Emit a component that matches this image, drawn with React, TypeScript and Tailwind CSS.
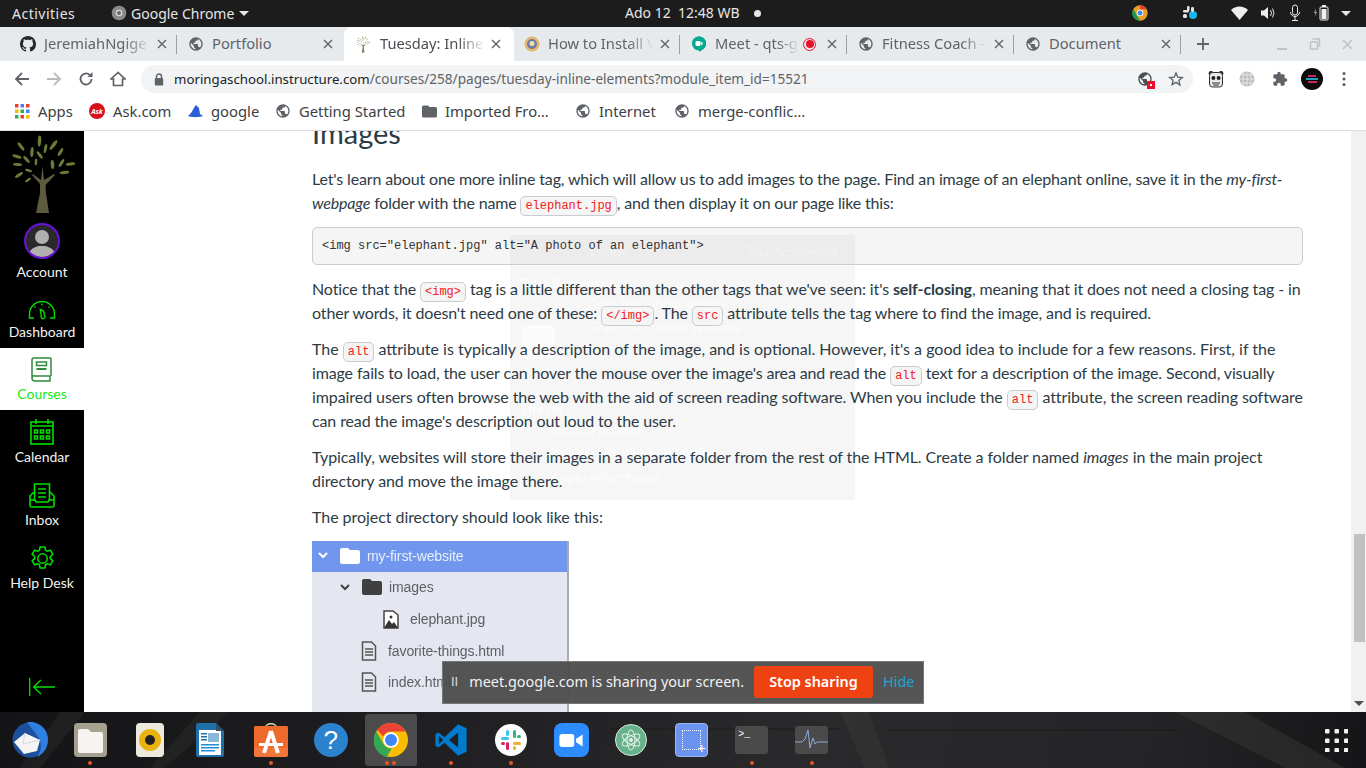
import React from "react";

const Globe = ({ size = 16, color = "#5f6368" }: { size?: number; color?: string }) => (
  <svg width={size} height={size} viewBox="0 0 24 24" className="shrink-0">
    <path fill={color} d="M12 2C6.48 2 2 6.48 2 12s4.48 10 10 10 10-4.48 10-10S17.52 2 12 2zm-1 17.93c-3.95-.49-7-3.85-7-7.93 0-.62.08-1.21.21-1.79L9 15v1c0 1.1.9 2 2 2v1.93zm6.9-2.54c-.26-.81-1-1.39-1.9-1.39h-1v-3c0-.55-.45-1-1-1H8v-2h2c.55 0 1-.45 1-1V7h2c1.1 0 2-.9 2-2v-.41c2.93 1.19 5 4.06 5 7.41 0 2.08-.8 3.97-2.1 5.39z" />
  </svg>
);

const GitHub = () => (
  <svg width="16" height="16" viewBox="0 0 16 16" className="shrink-0">
    <path fill="#24292e" d="M8 0C3.58 0 0 3.58 0 8c0 3.54 2.29 6.53 5.47 7.59.4.07.55-.17.55-.38 0-.19-.01-.82-.01-1.49-2.01.37-2.53-.49-2.69-.94-.09-.23-.48-.94-.82-1.13-.28-.15-.68-.52-.01-.53.63-.01 1.08.58 1.23.82.72 1.21 1.87.87 2.33.66.07-.52.28-.87.51-1.07-1.78-.2-3.64-.89-3.64-3.95 0-.87.31-1.59.82-2.15-.08-.2-.36-1.02.08-2.12 0 0 .67-.21 2.2.82.64-.18 1.32-.27 2-.27s1.36.09 2 .27c1.53-1.04 2.2-.82 2.2-.82.44 1.1.16 1.92.08 2.12.51.56.82 1.27.82 2.15 0 3.07-1.87 3.75-3.65 3.95.29.25.54.73.54 1.48 0 1.07-.01 1.93-.01 2.2 0 .21.15.46.55.38A8.01 8.01 0 0016 8c0-4.42-3.58-8-8-8z" />
  </svg>
);

const TreeIcon = ({ w, h, leaf, trunk }: { w: number; h: number; leaf: string; trunk: string }) => {
  const leaves: [number, number, number, number, number][] = [
    [39.5, 10, 1.8, 5.5, 3], [21, 15.5, 1.6, 5, -38], [32, 21, 1.6, 5, 5], [45.5, 17.5, 1.5, 4.6, 12],
    [53.5, 14, 1.8, 6, 38], [60.5, 21, 1.6, 4.6, 30], [39.7, 24, 1.5, 4.4, -38], [17, 25.5, 1.5, 4.8, -72], [26.5, 28.5, 1.6, 4.4, -42],
    [36, 31, 1.3, 3.4, 3], [52.5, 33.5, 1.8, 4.6, -4], [61.5, 32, 1.6, 4.6, 32], [17.5, 33.5, 1.4, 4.6, -88], [70.5, 33, 1.6, 4.8, 84],
    [64.5, 41.5, 1.6, 4.8, 84], [28.5, 39.5, 1.3, 3.6, -75], [19, 44, 1.6, 4.6, 55], [28, 49, 1.3, 3.4, 55],
  ];
  return (
    <svg width={w} height={h} viewBox="0 0 84 84" className="shrink-0">
      {leaves.map(([x, y, rx, ry, a], i) => (
        <ellipse key={i} cx={x} cy={y} rx={rx} ry={ry} transform={`rotate(${a} ${x} ${y})`} fill={leaf} />
      ))}
      <path fill={trunk} d="M36 82L40 62L40 53L32 44L33 43L41 49L42.5 35L44 49L54 43L55 44L45.500 54L46 62L49 82Z" />
    </svg>
  );
};

const Tab = ({ icon, title, active, sep = true, fade = true, extra, w }: { icon: React.ReactNode; title: string; active?: boolean; sep?: boolean; fade?: boolean; extra?: React.ReactNode; w: string }) => (
  <div className={`relative flex h-[34px] shrink-0 items-center ${w} ${active ? "rounded-t-[8px] bg-white pl-[10px] pr-[11px]" : "pl-[10px] pr-[9px]"}`}>
    {icon}
    <span className={`ml-[8px] min-w-0 flex-1 overflow-hidden whitespace-nowrap pb-[2px] text-[14.7px] ${active ? "text-[#4a4d51]" : "text-[#5f6368]"} ${fade ? "[mask-image:linear-gradient(to_right,black_75%,transparent_100%)]" : ""}`}>{title}</span>
    {extra}
    <svg width="10" height="10" viewBox="0 0 10 10" className="ml-[6px] mr-[2px] shrink-0"><path d="M1 1l8 8M9 1l-8 8" stroke="#5f6368" strokeWidth="1.4" /></svg>
    {sep && <span className="absolute right-[1px] top-[8px] h-[19px] w-px bg-[#9aa0a6]" />}
  </div>
);

const Bookmark = ({ icon, label, w }: { icon: React.ReactNode; label: string; w: string }) => (
  <div className={`flex items-center gap-[8px] whitespace-nowrap text-[14.800px] text-[#3c4043] ${w}`}>
    {icon}
    <span>{label}</span>
  </div>
);

const NavItem = ({ icon, label, active, h }: { icon: React.ReactNode; label: string; active?: boolean; h: string }) => (
  <div className={`flex flex-col items-center justify-end pb-[6px] ${h} ${active ? "bg-white text-[#14ea14]" : "text-[#f2f2f2]"}`}>
    {icon}
    <span className="mt-[2px] text-[14px] leading-[20px]">{label}</span>
  </div>
);

const Code = ({ children }: { children: React.ReactNode }) => (
  <code className="rounded-[5px] border border-[#c7cdd1] bg-[#f5f5f5] px-[4px] py-[2px] font-['Liberation_Mono',monospace] text-[12px] leading-none tracking-normal text-[#f22020]">{children}</code>
);

const L = ({ t, children }: { t: string; children: React.ReactNode }) => (
  <span className={`block whitespace-nowrap ${t}`}>{children}</span>
);

const green = "#00e000";

const FolderI = ({ c }: { c: string }) => (
  <svg width="20" height="16" viewBox="0 0 20 16" className="shrink-0"><path fill={c} d="M2 0h6l2 2h8a2 2 0 012 2v10a2 2 0 01-2 2H2a2 2 0 01-2-2V2a2 2 0 012-2z" /></svg>
);
const FileI = () => (
  <svg width="16" height="20" viewBox="0 0 16 20" className="shrink-0" fill="none" stroke="#555" strokeWidth="1.5"><path d="M1.5 1h9l4 4v14h-13zM4 8h8M4 11h8M4 14h8" /></svg>
);
const Chev = ({ c }: { c: string }) => (
  <svg width="10" height="7" viewBox="0 0 10 7" className="shrink-0"><path d="M1 1l4 4 4-4" fill="none" stroke={c} strokeWidth="2" /></svg>
);

const TreeRow = ({ pad, children, h = "h-[31.500px]" }: { pad: string; children: React.ReactNode; h?: string }) => (
  <div className={`flex items-center ${h} ${pad} font-['Liberation_Sans',sans-serif] text-[14px] tracking-[-0.1px] text-[#5c5f66] blur-[0.6px]`}>{children}</div>
);

const DockItem = ({ children, dots = 0, active }: { children: React.ReactNode; dots?: number; active?: boolean }) => (
  <div className={`flex h-[52px] w-[52px] shrink-0 flex-col items-center rounded-[3px] pt-[4px] ${active ? "bg-white/20" : ""}`}>
    <div className="flex h-[44px] items-center justify-center">{children}</div>
    <div className="mt-[-1px] flex h-[4px] justify-center gap-[3px]">
      {Array.from({ length: dots }).map((_, i) => (
        <span key={i} className="h-[4px] w-[4px] rounded-full bg-[#e95420]" />
      ))}
    </div>
  </div>
);

export default function App() {
  return (
    <div className="flex h-[768px] w-[1366px] flex-col overflow-hidden bg-white font-['Noto_Sans',sans-serif]">
      {/* GNOME top bar */}
      <header className="relative flex h-[27px] shrink-0 items-center bg-[#1c1c1c] pb-[1px] text-[14px] text-[#e6e6e6]">
        <span className="ml-[12px] w-[99px] tracking-[0.5px]">Activities</span>
        <svg width="16" height="16" viewBox="0 0 24 24" className="shrink-0"><circle cx="12" cy="12" r="11" fill="#8a8a8a" /><circle cx="12" cy="12" r="5" fill="#d8d8d8" /><circle cx="12" cy="12" r="3" fill="#666" /></svg>
        <span className="ml-[4px]">Google Chrome</span>
        <span className="ml-[5px] h-0 w-0 border-x-[5px] border-t-[5px] border-x-transparent border-t-[#e6e6e6]" />
        <span className="absolute left-[625px] top-[2px] whitespace-pre">Ado 12  12:48 WB</span>
        <span className="absolute left-[754px] top-[10px] h-[7px] w-[7px] rounded-full bg-[#e6e6e6]" />
        <div className="ml-auto flex items-center">
          <svg width="16" height="16" viewBox="0 0 48 48" className="shrink-0"><circle cx="24" cy="24" r="23" fill="#e8a020" /><path d="M24 1a23 23 0 0120 11.500H24z" fill="#db4437" /><path d="M4 12.500L14 30l10 17a23 23 0 01-20-34.500z" fill="#0f9d58" /><circle cx="24" cy="24" r="10" fill="#fff" /><circle cx="24" cy="24" r="7.500" fill="#4285f4" /></svg>
          <svg width="16" height="16" viewBox="0 0 16 16" className="ml-[34px] shrink-0"><rect x="1" y="5" width="6" height="2.500" rx="1.200" fill="#e6e6e6" /><rect x="5" y="1" width="2.500" height="5" rx="1.200" fill="#e6e6e6" /><rect x="1" y="9" width="4" height="4" rx="1.500" fill="#e6e6e6" /><circle cx="11" cy="10" r="4" fill="#16b6e8" /><rect x="9" y="2" width="3" height="5" rx="1.400" fill="#e6e6e6" /></svg>
          <svg width="17" height="14" viewBox="0 0 17 14" className="ml-[33px] shrink-0"><path d="M0 4a12 12 0 0117 0l-8.500 10z" fill="#eee" /></svg>
          <svg width="15" height="14" viewBox="0 0 15 14" className="ml-[13px] shrink-0"><path d="M0 4.500h3L7 1v12L3 9.500H0z" fill="#eee" /><path d="M9.500 4q2 3 0 6M11.500 2.500q3 4.500 0 9" stroke="#ddd" fill="none" /></svg>
          <svg width="12" height="18" viewBox="0 0 12 18" className="ml-[13px] shrink-0"><rect x="3.500" y="1" width="5" height="10" rx="2.500" fill="none" stroke="#eee" /><path d="M1.500 8a4.500 4.500 0 009 0M6 12.500V16M3 16.500h6" stroke="#eee" fill="none" /></svg>
          <svg width="16" height="18" viewBox="0 0 16 18" className="ml-[12px] shrink-0"><path d="M3 4L1 9h1.500L1.500 13 4 8H2.500z" fill="#aaa" /><rect x="7" y="3" width="8" height="13" rx="1" fill="none" stroke="#eee" /><rect x="8.500" y="5" width="5" height="10" fill="#eee" /><rect x="9" y="1" width="4" height="2" fill="#eee" /></svg>
          <span className="ml-[12px] mr-[15px] h-0 w-0 border-x-[5px] border-t-[5px] border-x-transparent border-t-[#e6e6e6]" />
        </div>
      </header>

      {/* Tab strip */}
      <div className="flex h-[34px] shrink-0 items-center bg-[#e7eaed] pl-[10px]">
        <Tab w="w-[168px]" icon={<GitHub />} title="JeremiahNgige" />
        <Tab w="w-[166px]" icon={<Globe />} title="Portfolio" sep={false} fade={false} />
        <Tab w="w-[170px]" active icon={<TreeIcon w={18} h={18} leaf="#8a9a5b" trunk="#77775a" />} title="Tuesday: Inline" sep={false} />
        <Tab
          w="w-[167px]"
          icon={
            <svg width="16" height="16" viewBox="0 0 16 16" className="shrink-0"><circle cx="8" cy="8" r="7.500" fill="#e8b56a" /><circle cx="8" cy="8" r="5" fill="#6b7ea8" /><circle cx="8" cy="7.500" r="2.500" fill="#f5dcb0" /></svg>
          }
          title="How to Install V"
        />
        <Tab
          w="w-[167px]"
          icon={
            <svg width="16" height="16" viewBox="0 0 16 16" className="shrink-0"><path d="M8 0.500a7 7 0 017 7c0 4-3.500 6.500-7 8v-2a5.500 5.500 0 010-13z" fill="#00897b" /><circle cx="8" cy="7.500" r="7" fill="#00a98f" /><rect x="4.500" y="5" width="5" height="5" rx="1" fill="#fff" /><path d="M9.500 7l2-1.500v4l-2-1.500z" fill="#fff" /></svg>
          }
          title="Meet - qts-g"
          extra={
            <span className="ml-[4px] mr-[5px] flex h-[13px] w-[13px] shrink-0 items-center justify-center rounded-full border-[1.500px] border-[#e8102a]"><span className="h-[8px] w-[8px] rounded-full bg-[#e8102a]" /></span>
          }
        />
        <Tab w="w-[167px]" icon={<Globe />} title="Fitness Coach -" />
        <Tab w="w-[167px]" icon={<Globe />} title="Document" fade={false} />
        <svg width="14" height="14" viewBox="0 0 14 14" className="ml-[14px] shrink-0"><path d="M7 1v12M1 7h12" stroke="#5f6368" strokeWidth="1.800" /></svg>
        <div className="ml-auto flex items-center">
          <span className="mt-[10px] h-[2px] w-[10px] bg-[#bfc3c7]" />
          <svg width="12" height="12" viewBox="0 0 12 12" className="ml-[22px] shrink-0"><path d="M3.500 1h7v7h-2M1.500 4h7v7h-7z" fill="none" stroke="#bfc3c7" strokeWidth="1.500" /></svg>
          <svg width="11" height="11" viewBox="0 0 11 11" className="ml-[21px] mr-[13px] shrink-0"><path d="M1 1l9 9M10 1l-9 9" stroke="#bfc3c7" strokeWidth="1.600" /></svg>
        </div>
      </div>

      {/* Toolbar */}
      <div className="flex h-[36px] shrink-0 items-center bg-white">
        <svg width="16" height="16" viewBox="0 0 16 16" className="ml-[14px] shrink-0"><path d="M15 8H2M8 2L2 8l6 6" fill="none" stroke="#5f6368" strokeWidth="1.800" /></svg>
        <svg width="16" height="16" viewBox="0 0 16 16" className="ml-[16px] shrink-0"><path d="M1 8h13M8 2l6 6-6 6" fill="none" stroke="#b8babd" strokeWidth="1.800" /></svg>
        <svg width="16" height="16" viewBox="0 0 16 16" className="ml-[16px] shrink-0"><path d="M13.500 8a5.500 5.500 0 11-1.700-4" fill="none" stroke="#5f6368" strokeWidth="1.800" /><path d="M14.500 1v5h-5z" fill="#5f6368" /></svg>
        <svg width="16" height="16" viewBox="0 0 16 16" className="ml-[16px] shrink-0"><path d="M8 1.500L1 8h2.500v6.500h9V8H15z" fill="none" stroke="#5f6368" strokeWidth="1.700" /></svg>
        <div className="ml-[15px] flex h-[28px] w-[1052px] shrink-0 items-center rounded-full bg-[#f1f3f4] pl-[13px]">
          <svg width="10" height="13" viewBox="0 0 10 13" className="shrink-0"><path d="M2.500 5V3.500a2.500 2.500 0 015 0V5" fill="none" stroke="#5f6368" strokeWidth="1.400" /><rect x="0.800" y="5" width="8.400" height="7.500" rx="1" fill="#5f6368" /></svg>
          <span className="ml-[10px] whitespace-nowrap pb-[2px]"><span className="text-[13.250px] text-[#202124]">moringaschool.instructure.com</span><span className="text-[13.600px] text-[#5f6368]">/courses/258/pages/tuesday-inline-elements?module_item_id=15521</span></span>
          <div className="ml-auto flex items-center">
            <span className="relative mr-[2px] block h-[16px] w-[16px]">
              <Globe size={16} color="#4a4d51" />
              <span className="absolute bottom-[-2px] right-[-2px] flex h-[8px] w-[8px] items-center justify-center bg-[#e8102a]"><span className="h-[2px] w-[2px] bg-white" /></span>
            </span>
            <svg width="16" height="16" viewBox="0 0 24 24" className="ml-[13px] mr-[9px] shrink-0"><path d="M12 3l2.700 6.200 6.800.6-5.100 4.500 1.500 6.700L12 17l-5.900 3.500 1.500-6.700L2.500 9.800l6.800-.6z" fill="none" stroke="#5f6368" strokeWidth="2" /></svg>
          </div>
        </div>
        <svg width="16" height="18" viewBox="0 0 16 18" className="ml-[15px] shrink-0"><circle cx="3" cy="3.500" r="2.400" fill="#222" /><circle cx="13" cy="3.500" r="2.400" fill="#222" /><rect x="1.500" y="2.500" width="13" height="14.500" rx="3" fill="#e8e8e8" stroke="#333" /><circle cx="5.400" cy="8" r="2" fill="#222" /><circle cx="10.600" cy="8" r="2" fill="#222" /><path d="M4 13h8M5 15h6" stroke="#333" /></svg>
        <svg width="16" height="16" viewBox="0 0 16 16" className="ml-[15px] shrink-0"><circle cx="8" cy="8" r="7.500" fill="#bdbdbd" /><path d="M0.500 8h15M8 0.500v15M2 4h12M2 12h12M5 1.500q-2.500 6.500 0 13M11 1.500q2.500 6.500 0 13" stroke="#f2f2f2" strokeWidth="0.700" fill="none" /></svg>
        <svg width="16" height="16" viewBox="0 0 24 24" className="ml-[17px] shrink-0"><path fill="#5f6368" d="M20.500 11H19V7a2 2 0 00-2-2h-4V3.500a2.500 2.500 0 00-5 0V5H4a2 2 0 00-2 2v3.800h1.500a2.700 2.700 0 010 5.400H2V20a2 2 0 002 2h3.800v-1.500a2.700 2.700 0 015.400 0V22H17a2 2 0 002-2v-4h1.500a2.500 2.500 0 000-5z" /></svg>
        <span className="ml-[13px] flex h-[22px] w-[22px] shrink-0 flex-col items-center justify-center gap-[1px] rounded-full bg-[#0b0b0b]"><span className="h-[2px] w-[8px] bg-[#d0245e]" /><span className="h-[2px] w-[12px] bg-[#1aa5c4]" /><span className="h-[2px] w-[9px] bg-[#c2304f]" /></span>
        <svg width="4" height="16" viewBox="0 0 4 16" className="ml-[19px] shrink-0"><circle cx="2" cy="2.500" r="1.600" fill="#5f6368" /><circle cx="2" cy="8" r="1.600" fill="#5f6368" /><circle cx="2" cy="13.500" r="1.600" fill="#5f6368" /></svg>
      </div>

      {/* Bookmarks bar */}
      <div className="flex h-[34px] shrink-0 items-center border-b border-[#dadce0] bg-white pb-[5px] pl-[15px]">
        <Bookmark
          w="w-[74px]"
          icon={
            <svg width="15" height="15" viewBox="0 0 15 15" className="shrink-0">
              {[0, 5.5, 11].map((y, r) =>
                [0, 5.5, 11].map((x, c) => (
                  <rect key={`${r}${c}`} x={x} y={y} width="3.500" height="3.500" fill={[["#ea4335", "#4285f4", "#ea4335"], ["#fbbc04", "#34a853", "#4285f4"], ["#34a853", "#ea4335", "#fbbc04"]][r][c]} />
                ))
              )}
            </svg>
          }
          label="Apps"
        />
        <Bookmark
          w="w-[98px]"
          icon={
            <span className="flex h-[16px] w-[16px] shrink-0 items-center justify-center rounded-full bg-[#d8101c] text-[7px] font-bold italic leading-none text-white">Ask</span>
          }
          label="Ask.com"
        />
        <Bookmark
          w="w-[88px]"
          icon={<svg width="16" height="15" viewBox="0 0 16 15" className="shrink-0"><path d="M9 1C7 3 6 6 4 9L1 12c2 1.500 12 1.500 15 0l-3-2-1-6c-1-1-2-2-3-3z" fill="#2a5fd8" /></svg>}
          label="google"
        />
        <Bookmark w="w-[147px]" icon={<Globe />} label="Getting Started" />
        <Bookmark
          w="w-[153px]"
          icon={<svg width="15" height="13" viewBox="0 0 20 16" className="shrink-0"><path fill="#5f6368" d="M2 0h6l2 2h8a2 2 0 012 2v10a2 2 0 01-2 2H2a2 2 0 01-2-2V2a2 2 0 012-2z" /></svg>}
          label="Imported Fro…"
        />
        <Bookmark w="w-[99px]" icon={<Globe />} label="Internet" />
        <Bookmark w="w-[140px]" icon={<Globe />} label="merge-conflic…" />
      </div>

      {/* Main */}
      <main className="relative flex min-h-0 flex-1 overflow-hidden">
        {/* LMS sidebar */}
        <nav className="flex w-[84px] shrink-0 flex-col bg-black font-['Lato',sans-serif]">
          <div className="flex h-[84px] shrink-0 justify-center"><TreeIcon w={84} h={84} leaf="#6a7c35" trunk="#5c5a3f" /></div>
          <div className="flex h-[73px] shrink-0 flex-col items-center justify-end pb-[6px] text-[#f2f2f2]">
            <span className="flex h-[36px] w-[36px] items-center justify-center overflow-hidden rounded-full border-2 border-[#6a10d8] bg-[#2a2a2a]">
              <svg width="32" height="32" viewBox="0 0 32 32"><circle cx="16" cy="12" r="7" fill="#b0b0b0" /><path d="M2 32c1-9 8-10 11-11h6c3 1 10 2 11 11z" fill="#b0b0b0" /></svg>
            </span>
            <span className="mt-[3px] text-[14px] leading-[20px]">Account</span>
          </div>
          <NavItem
            h="h-[60px] shrink-0"
            label="Dashboard"
            icon={<svg width="28" height="20" viewBox="0 0 28 20" fill="none" stroke={green} strokeWidth="1.400"><path d="M6 18H1.500v-4a12.500 12.500 0 0125 0v4H22" /><path d="M12.300 9.500l3.200 1.500 1.500 6a2 2 0 01-3.500 1z" /><path d="M14 3.500v2M6.500 6.500l1 1M21.500 6.500l-1 1" /></svg>}
          />
          <NavItem
            active
            h="h-[62px] shrink-0"
            label="Courses"
            icon={<svg width="22" height="25" viewBox="0 0 22 25" fill="none" stroke="#2e8b3d" strokeWidth="1.500"><path d="M20 1H3a2 2 0 00-2 2v18a3 3 0 003 3h15v-5H4a2 2 0 00-3 2" /><path d="M20 1v18" /><rect x="5.500" y="5" width="10" height="3.500" /><path d="M5.500 12h10" strokeWidth="2" /></svg>}
          />
          <NavItem
            h="h-[63px] shrink-0"
            label="Calendar"
            icon={<svg width="24" height="26" viewBox="0 0 24 26" fill="none" stroke={green} strokeWidth="1.600"><rect x="1" y="3" width="22" height="22" /><path d="M6 0v5M18 0v5M1 7h22" /><path d="M4.500 11h3v3h-3zM10.500 11h3v3h-3zM16.500 11h3v3h-3zM4.500 17h3v3h-3zM10.500 17h3v3h-3zM16.500 17h3v3h-3z" /></svg>}
          />
          <NavItem
            h="h-[63px] shrink-0"
            label="Inbox"
            icon={<svg width="26" height="25" viewBox="0 0 26 25" fill="none" stroke={green} strokeWidth="1.600"><path d="M5.500 18V1h15v17" /><path d="M9 6h8M9 10h8M9 14h8" /><path d="M5 9L1 13v9a2 2 0 002 2h20a2 2 0 002-2v-9l-4-4M1 17h5l1 2h12l1-2h5" /></svg>}
          />
          <NavItem
            h="h-[63px] shrink-0"
            label="Help Desk"
            icon={<svg width="25" height="25" viewBox="0 0 24 24" fill="none" stroke={green} strokeWidth="1.500"><path d="M9.700 1h4.600l.6 3.100 1.700.9 3-1 2.300 4-2.400 2.100v2l2.400 2-2.300 4-3-1-1.700 1-.6 3.100H9.700l-.6-3.100-1.700-1-3 1-2.300-4 2.400-2v-2L2.100 8l2.300-4 3 1 1.700-1z" /><circle cx="12" cy="12" r="4.500" /></svg>}
          />
          <div className="mt-auto flex justify-center pb-[16px]">
            <svg width="26" height="18" viewBox="0 0 26 18" fill="none" stroke={green} strokeWidth="1.300"><path d="M0.700 0v18M26 9H4.500M12 2L4.500 9l7.500 7" /></svg>
          </div>
        </nav>

        {/* Article */}
        <article className="relative isolate min-w-0 flex-1 pl-[228px] pr-[63px] font-['Lato',sans-serif] text-[16px] leading-[24px] text-[#2d3b45]">
          {/* Faint ghost of a screenshot dialog behind the page text */}
          <div className="pointer-events-none absolute left-[426px] top-[104px] -z-10 h-[265px] w-[345px] whitespace-nowrap bg-black/[0.035] text-[14px] leading-[18px] text-white/70">
            <span className="absolute left-[80px] top-[8px] text-[13px]">Cancel</span>
            <span className="absolute left-[236px] top-[8px] text-[13px]">Take Screenshot</span>
            <span className="absolute left-[10px] top-[39px] font-bold">Take Screenshot</span>
            <span className="absolute left-[77px] top-[60px]">Grab the whole screen</span>
            <span className="absolute left-[77px] top-[83px]">Grab the current window</span>
            <span className="absolute left-[10px] top-[165px] font-bold">Effects</span>
            <span className="absolute left-[40px] top-[186px]">Include pointer</span>
            <span className="absolute left-[40px] top-[207px]">Include the window border</span>
            <span className="absolute left-[40px] top-[234px]">Apply effect:</span>
            <span className="absolute left-[116px] top-[234px]">None</span>
            <span className="absolute left-[11px] top-[90px] h-[34px] w-[34px] rounded-[4px] bg-white/50" />
          </div>
          <h2 className="mt-[-15px] h-[39px] text-[29px] leading-[33px]">Images</h2>
          <p className="mt-[12px]">
            <L t="tracking-[-0.15px]">Let's learn about one more inline tag, which will allow us to add images to the page. Find an image of an elephant online, save it in the <em>my-first-</em></L>
            <L t="tracking-[-0.17px]"><em>webpage</em> folder with the name <Code>elephant.jpg</Code>, and then display it on our page like this:</L>
          </p>
          <pre className="mt-[12px] h-[38px] rounded-[5px] border border-[#c7cdd1] bg-black/[0.04] px-[9px] pt-[6px] font-['Liberation_Mono',monospace] text-[12px] leading-[24px] text-[#333]">{`<img src="elephant.jpg" alt="A photo of an elephant">`}</pre>
          <p className="mt-[12px]">
            <L t="tracking-[-0.13px]">Notice that the <Code>&lt;img&gt;</Code> tag is a little different than the other tags that we've seen: it's <strong>self-closing</strong>, meaning that it does not need a closing tag - in</L>
            <L t="tracking-[-0.14px]">other words, it doesn't need one of these: <Code>&lt;/img&gt;</Code>. The <Code>src</Code> attribute tells the tag where to find the image, and is required.</L>
          </p>
          <p className="mt-[12px]">
            <L t="tracking-[0px]">The <Code>alt</Code> attribute is typically a description of the image, and is optional. However, it's a good idea to include for a few reasons. First, if the</L>
            <L t="tracking-[-0.13px]">image fails to load, the user can hover the mouse over the image's area and read the <Code>alt</Code> text for a description of the image. Second, visually</L>
            <L t="tracking-[-0.08px]">impaired users often browse the web with the aid of screen reading software. When you include the <Code>alt</Code> attribute, the screen reading software</L>
            <L t="tracking-[-0.12px]">can read the image's description out loud to the user.</L>
          </p>
          <p className="mt-[12px]">
            <L t="tracking-[-0.085px]">Typically, websites will store their images in a separate folder from the rest of the HTML. Create a folder named <em>images</em> in the main project</L>
            <L t="tracking-[-0.08px]">directory and move the image there.</L>
          </p>
          <p className="mt-[12px] tracking-[-0.05px]">The project directory should look like this:</p>
          <div className="mt-[12px] w-[257px] border-r-2 border-[#a9abb0] bg-[#e4e7ef]">
            <TreeRow pad="pl-[6px] pb-[2px] bg-[#7097ed]" h="h-[31px]">
              <Chev c="#fff" />
              <span className="ml-[12px] flex"><FolderI c="#fff" /></span>
              <span className="ml-[7px] text-[#e8eefb]">my-first-website</span>
            </TreeRow>
            <TreeRow pad="pl-[28px] pb-[1px]">
              <Chev c="#444" />
              <span className="ml-[12px] flex"><FolderI c="#404040" /></span>
              <span className="ml-[7px]">images</span>
            </TreeRow>
            <TreeRow pad="pl-[71px]">
              <svg width="16" height="19" viewBox="0 0 16 19" className="shrink-0"><path d="M1 1h9l5 4v13H1z" fill="#fff" stroke="#444" strokeWidth="1.500" /><path d="M1 18l5-8 3 4 2-2 4 6z" fill="#333" /><circle cx="8" cy="7" r="1.500" fill="#333" /></svg>
              <span className="ml-[11px]">elephant.jpg</span>
            </TreeRow>
            <TreeRow pad="pl-[49px]">
              <FileI />
              <span className="ml-[11px]">favorite-things.html</span>
            </TreeRow>
            <TreeRow pad="pl-[49px]">
              <FileI />
              <span className="ml-[11px]">index.html</span>
            </TreeRow>
            <div className="h-[20px]" />
          </div>
        </article>

        {/* Page scrollbar */}
        <div className="absolute right-0 top-0 flex h-full w-[15px] flex-col items-center bg-[#f1f1f1] pl-[1px]">
          <div className="mt-[403px] h-[108px] w-[11px] bg-[#c1c1c1]" />
          <span className="mb-[6px] mt-auto h-0 w-0 border-x-[5px] border-t-[5px] border-x-transparent border-t-[#505050]" />
        </div>

        {/* Screen sharing notice */}
        <div className="absolute left-[442px] top-[530px] flex h-[43px] w-[482px] items-center border border-[#777] bg-[#4c4c4c]/95 pb-[1px] pl-[8px] text-[14.400px] text-[#f2f2f2]">
          <span className="font-['Liberation_Sans',sans-serif] text-[13px] text-[#ddd]">II</span>
          <span className="ml-[11px]">meet.google.com is sharing your screen.</span>
          <span className="ml-[10px] flex h-[32px] w-[119px] items-center justify-center rounded-[3px] bg-[#ee4213] font-semibold text-white">Stop sharing</span>
          <span className="ml-[10px] text-[#19a4dc]">Hide</span>
        </div>
      </main>

      {/* Dock */}
      <footer className="relative flex h-[56px] shrink-0 items-center overflow-hidden bg-[linear-gradient(100deg,#141416_0%,#1f1f21_30%,#2a2a2c_60%,#242426_85%,#151517_100%)] pl-[4px]">
        <svg className="pointer-events-none absolute inset-0 h-full w-full" viewBox="0 0 1366 56" preserveAspectRatio="none">
          <path d="M840 0l25 56h24l-20-56zM1175 0l110 56h60l-100-56z" fill="#3a3a3a" opacity="0.45" />
          <path d="M610 17h230M890 18h290" stroke="#161616" strokeWidth="2" opacity="0.35" />
          <path d="M60 0L20 56h20l45-56zM200 0l-50 56h14L230 0z" fill="#333" opacity="0.35" />
        </svg>
        <div className="relative flex gap-[8.150px]">
          <DockItem>
            <svg width="36" height="36" viewBox="0 0 36 36"><circle cx="18" cy="18" r="17.500" fill="#1c4f9c" /><path d="M15 0a18 18 0 0121 18c0 8-5 14-11 17 5-7 5-14 1-20C23 10 19 6 15 0z" fill="#2f7fe0" /><path d="M2 20l11-9 15 7-3 11-13 3z" fill="#f4f4f4" /><path d="M13 11l-2 11 17-4" fill="none" stroke="#c8d0dc" strokeWidth="0.800" /></svg>
          </DockItem>
          <DockItem dots={1}>
            <span className="flex h-[34px] w-[33px] items-center justify-center rounded-[4px] bg-[#a5a090]"><svg width="25" height="25" viewBox="0 0 25 25"><path d="M2 1h8l3 3h10a2 2 0 012 2v17a2 2 0 01-2 2H2a2 2 0 01-2-2V3a2 2 0 012-2z" fill="#f6f4f0" /></svg></span>
          </DockItem>
          <DockItem>
            <span className="flex h-[34px] w-[28px] items-center justify-center rounded-[4px] bg-[#ede9dc]"><span className="flex h-[22px] w-[22px] items-center justify-center rounded-full bg-[#e8b30e]"><span className="h-[10px] w-[10px] rounded-full bg-[#222]" /></span></span>
          </DockItem>
          <DockItem>
            <svg width="28" height="34" viewBox="0 0 28 34"><path d="M0 2a2 2 0 012-2h18l8 8v24a2 2 0 01-2 2H2a2 2 0 01-2-2z" fill="#1f6fa8" /><rect x="3" y="7" width="22" height="25" fill="#fff" /><path d="M20 0l8 8h-8z" fill="#2f4f68" /><path d="M5 10h6v1.500H5zM5 13h6v1.500H5zM5 16h6v1.500H5z" fill="#1f6fa8" /><rect x="12" y="10" width="11" height="9" fill="#8cb8d8" /><path d="M5 21h18v1.500H5zM5 24h18v1.500H5zM5 27h14v1.500H5z" fill="#1f8fd8" /></svg>
          </DockItem>
          <DockItem dots={1}>
            <svg width="34" height="34" viewBox="0 0 34 34"><path d="M11 6c0-7 12-7 12 0" fill="none" stroke="#e8d8b0" strokeWidth="1.300" /><rect x="0" y="3" width="34" height="31" rx="2" fill="#f4763a" /><rect x="0" y="3" width="34" height="22" rx="2" fill="#ed6a2c" /><path d="M17 8L10 30M17 8l7 22" stroke="#fff" strokeWidth="4" fill="none" /><rect x="5" y="20" width="24" height="3" fill="#fff" /></svg>
          </DockItem>
          <DockItem>
            <span className="flex h-[34px] w-[34px] items-center justify-center rounded-full bg-[#2a83cc] font-['Liberation_Sans',sans-serif] text-[26px] leading-none text-white">?</span>
          </DockItem>
          <DockItem active dots={2}>
            <svg width="34" height="34" viewBox="0 0 48 48"><circle cx="24" cy="24" r="24" fill="#fbbc04" /><path d="M24 0a24 24 0 0120.800 12H24a12 12 0 00-11 7L4.500 9.500A24 24 0 0124 0z" fill="#ea4335" /><path d="M3.200 12L14 30.500a12 12 0 0011 5.500L18 48A24 24 0 013.200 12z" fill="#34a853" /><circle cx="24" cy="24" r="11" fill="#fff" /><circle cx="24" cy="24" r="8.500" fill="#4285f4" /></svg>
          </DockItem>
          <DockItem dots={1}>
            <svg width="34" height="34" viewBox="0 0 24 24"><path fill="#007acc" d="M17 0.800L7.500 10 3.200 6.700 1 7.800v8.400l2.200 1.100 4.300-3.300L17 23.200l6-2.900V3.700zM3.400 15V9l3 3zm13.600 2.300L10.600 12 17 6.700z" /></svg>
          </DockItem>
          <DockItem dots={1}>
            <span className="flex h-[32px] w-[32px] items-center justify-center rounded-full bg-white">
              <svg width="22" height="22" viewBox="0 0 22 22"><rect x="1" y="8" width="8" height="3" rx="1.500" fill="#36c5f0" /><rect x="6" y="1" width="3" height="6" rx="1.500" fill="#36c5f0" /><rect x="13" y="1" width="3" height="8" rx="1.500" fill="#2eb67d" /><rect x="17" y="6" width="4" height="3" rx="1.500" fill="#2eb67d" /><rect x="13" y="13" width="8" height="3" rx="1.500" fill="#ecb22e" /><rect x="13" y="17" width="3" height="4" rx="1.500" fill="#ecb22e" /><rect x="6" y="13" width="3" height="8" rx="1.500" fill="#e01e5a" /><rect x="1" y="13" width="4" height="3" rx="1.500" fill="#e01e5a" /></svg>
            </span>
          </DockItem>
          <DockItem>
            <span className="flex h-[34px] w-[35px] items-center justify-center rounded-[8px] bg-[#2d8cff]"><svg width="24" height="13" viewBox="0 0 25 14"><rect x="0" y="0" width="16" height="14" rx="3" fill="#fff" /><path d="M18 5l7-4.500v13L18 9z" fill="#fff" /></svg></span>
          </DockItem>
          <DockItem>
            <span className="flex h-[32px] w-[32px] items-center justify-center rounded-full border border-[#d8e8dc] bg-[#66b28a]"><svg width="24" height="24" viewBox="0 0 24 24" fill="none" stroke="#e6f2ea" strokeWidth="1"><ellipse cx="12" cy="12" rx="4" ry="10" /><ellipse cx="12" cy="12" rx="4" ry="10" transform="rotate(60 12 12)" /><ellipse cx="12" cy="12" rx="4" ry="10" transform="rotate(120 12 12)" /><circle cx="12" cy="12" r="1.500" fill="#e6f2ea" /></svg></span>
          </DockItem>
          <DockItem>
            <span className="relative block h-[34px] w-[33px] rounded-[4px] border border-[#9ab4f4] bg-[#6b93f0]">
              <span className="absolute inset-[6px] border border-dotted border-white" />
              <span className="absolute bottom-[0px] right-[1px] text-[15px] leading-[15px] text-white">+</span>
            </span>
          </DockItem>
          <DockItem dots={1}>
            <span className="flex h-[28px] w-[33px] items-start rounded-[3px] bg-[#4a4a4a] pl-[3px] pt-[3px] font-['Liberation_Mono',monospace] text-[10px] leading-[12px] text-white">&gt;_</span>
          </DockItem>
          <DockItem dots={1}>
            <span className="flex h-[28px] w-[33px] items-center justify-center rounded-[3px] bg-[#4a4a4a]"><svg width="33" height="22" viewBox="0 0 33 22" fill="none" stroke="#8fa8d8" strokeWidth="1"><path d="M0 13h7l3-3 3-9 2 18 3-10 2 6 2-2h11" /></svg></span>
          </DockItem>
        </div>
        <svg width="23" height="23" viewBox="0 0 23 23" className="relative ml-auto mr-[18px] shrink-0">
          {[0, 9.500, 19].map((y) => [0, 9.500, 19].map((x) => <rect key={`${x}${y}`} x={x} y={y} width="4.500" height="4.500" rx="1" fill="#f2f2f2" />))}
        </svg>
      </footer>
    </div>
  );
}
